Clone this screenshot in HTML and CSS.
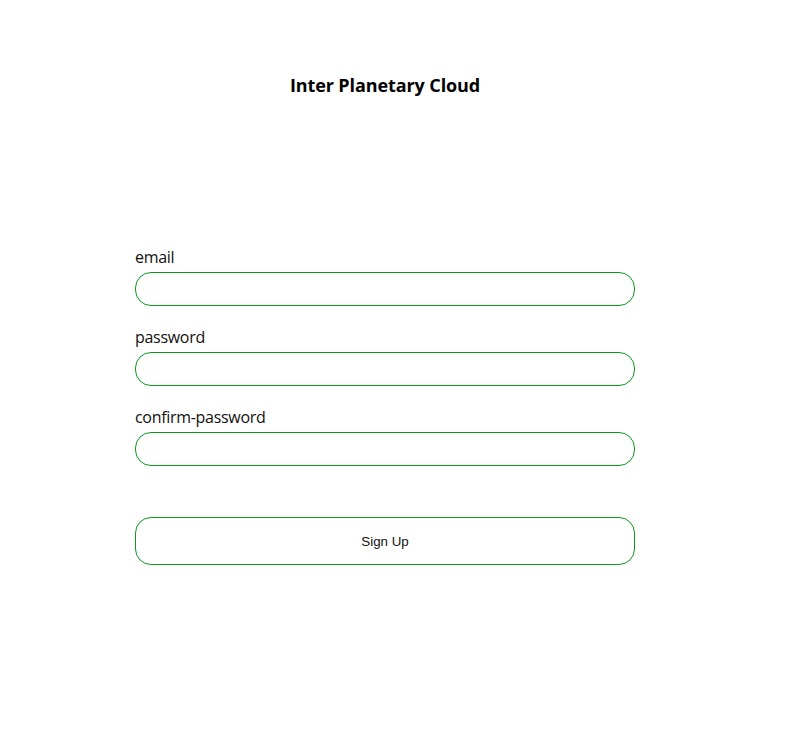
FILE: index.html
```html
<!DOCTYPE html>
<html>
<head>
<meta charset="utf-8">
<title>Inter Planetary Cloud</title>
<link rel="stylesheet" href="styles.css">
</head>
<body>
<div class="page">
  <h1 class="title">Inter Planetary Cloud</h1>
  <form class="form">
    <div class="field">
      <label class="label" for="email">email</label>
      <input class="input" id="email" type="email">
    </div>
    <div class="field">
      <label class="label" for="password">password</label>
      <input class="input" id="password" type="password">
    </div>
    <div class="field">
      <label class="label" for="confirm">confirm-password</label>
      <input class="input" id="confirm" type="password">
    </div>
    <button class="button" type="button">Sign Up</button>
  </form>
</div>
</body>
</html>
```

FILE: styles.css
```css
html, body {
  margin: 0;
  padding: 0;
  background: #ffffff;
}
body {
  font-family: "Open Sans", "Noto Sans", sans-serif;
  color: #111111;
}
.page {
  width: 770px;
  display: flex;
  flex-direction: column;
  align-items: center;
}
.title {
  margin: 73px 0 0;
  font-size: 18px;
  line-height: 24px;
  font-weight: 700;
  color: #000000;
  letter-spacing: -0.1px;
}
.form {
  width: 500px;
  margin-top: 149px;
  display: flex;
  flex-direction: column;
}
.field {
  display: flex;
  flex-direction: column;
  margin-bottom: 20px;
}
.label {
  font-size: 16px;
  line-height: 22px;
  height: 22px;
  margin-bottom: 4px;
  letter-spacing: -0.3px;
}
.input {
  box-sizing: border-box;
  width: 500px;
  height: 34px;
  border: 1px solid #0a9a1e;
  border-radius: 16px;
  outline: none;
  padding: 0 14px;
  font-size: 14px;
  background: #ffffff;
}
.button {
  box-sizing: border-box;
  margin-top: 31px;
  width: 500px;
  height: 48px;
  border: 1px solid #0a9a1e;
  border-radius: 16px;
  background: #ffffff;
  font-family: "Liberation Sans", Arial, sans-serif;
  font-size: 13.33px;
  color: #111111;
  cursor: pointer;
}
```
